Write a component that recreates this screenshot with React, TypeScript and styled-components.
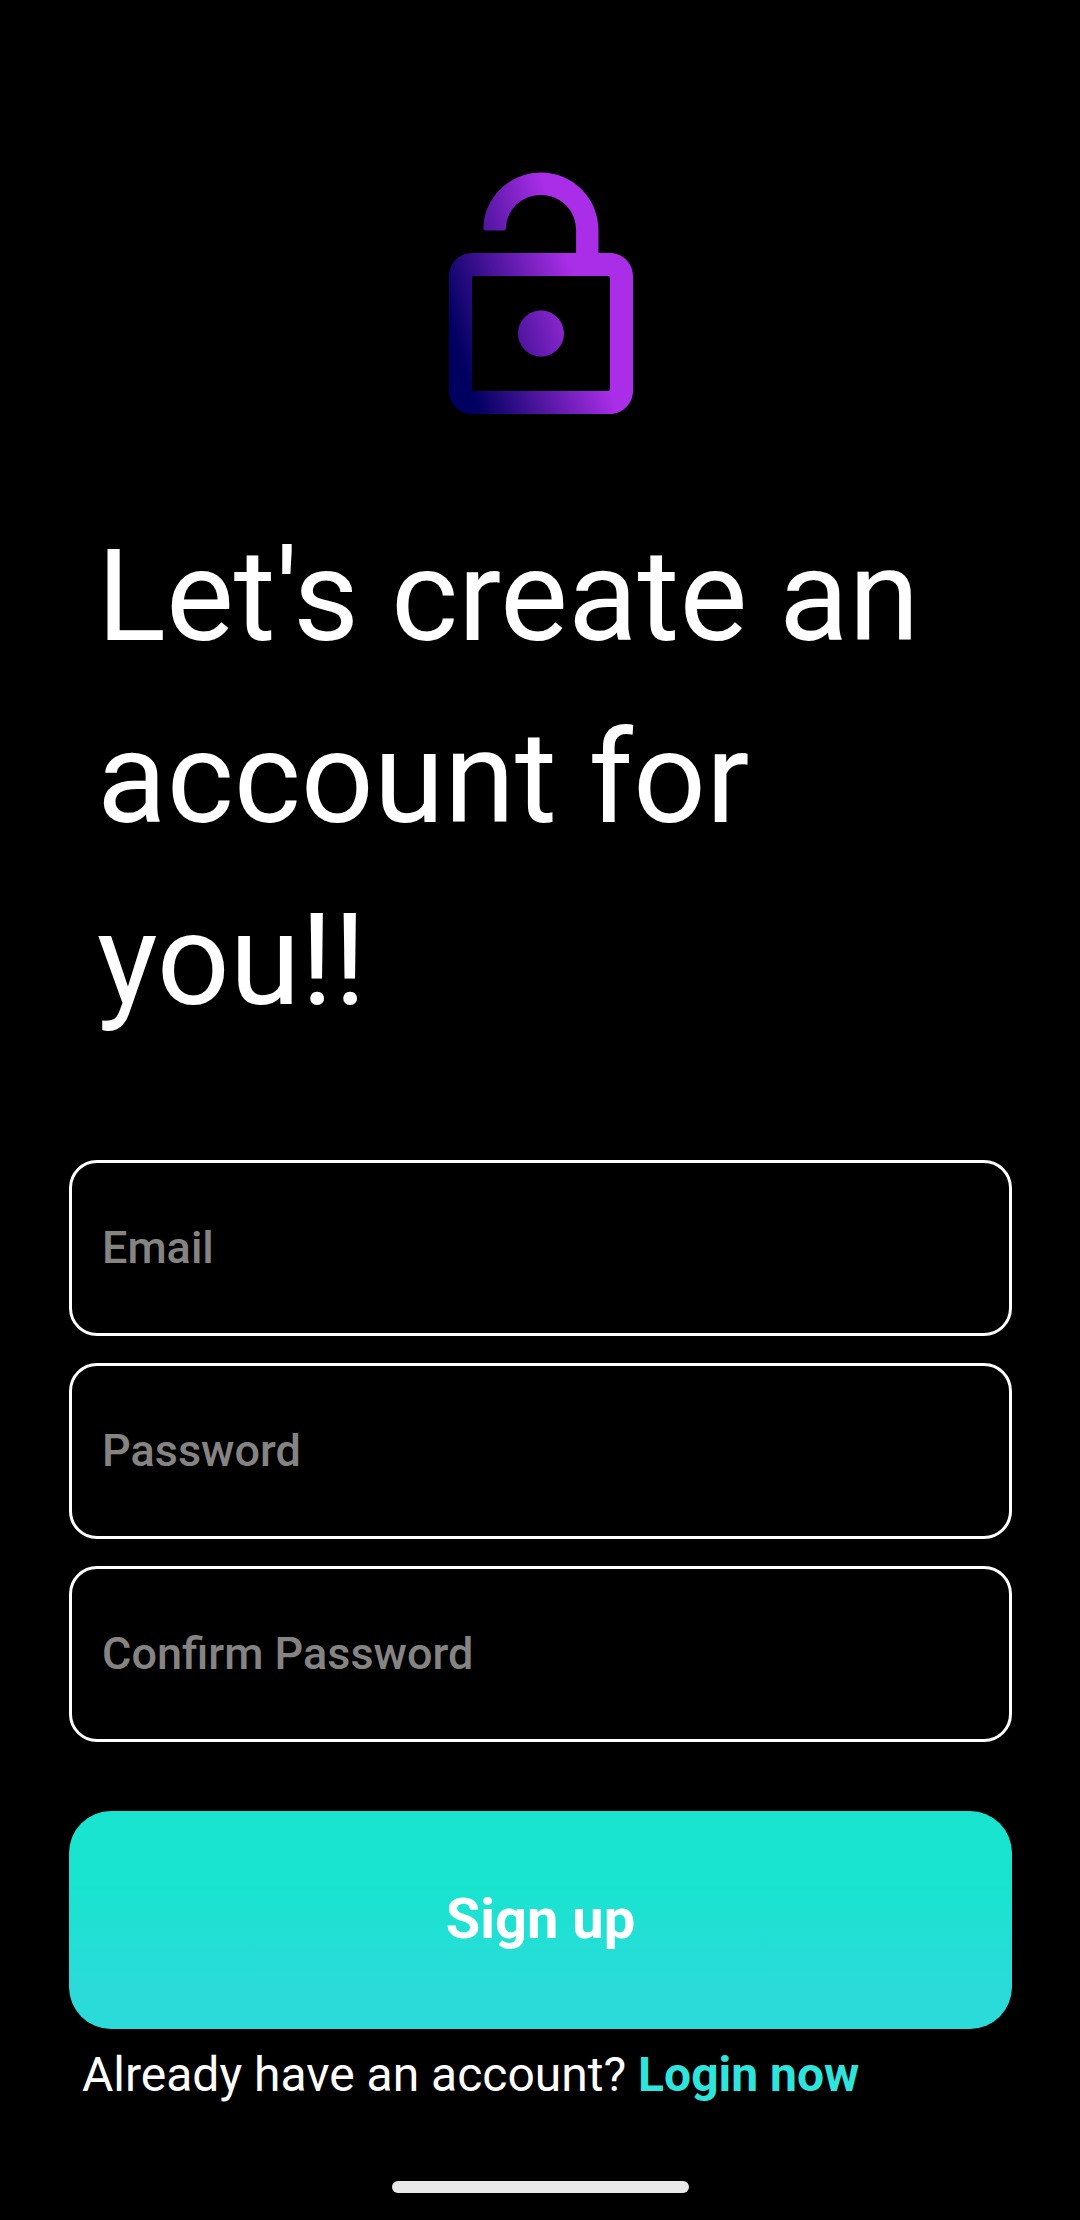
import React from "react";
import styled, { createGlobalStyle } from "styled-components";

const GlobalStyle = createGlobalStyle`
  *, *::before, *::after { box-sizing: border-box; }
  body {
    margin: 0;
    background: #000;
    color: #fff;
    font-family: Roboto, "Noto Sans", sans-serif;
  }
`;

const Screen = styled.main`
  display: flex;
  flex-direction: column;
  min-height: 100vh;
  padding: 161px 68px 27px 69px;
`;

const LockIcon = styled.svg`
  align-self: center;
  width: 276px;
  height: 276px;
`;

const Title = styled.h1`
  margin: 68px 28px 0;
  font-size: 128px;
  line-height: 182px;
  font-weight: 400;
`;

const Form = styled.form`
  display: flex;
  flex-direction: column;
  gap: 27px;
  margin-top: 109px;
`;

const Field = styled.input`
  width: 100%;
  height: 176px;
  padding: 0 30px 2px;
  border: 3px solid #fff;
  border-radius: 28px;
  outline: none;
  background: transparent;
  color: #fff;
  font-family: inherit;
  font-size: 45px;
  font-weight: 500;

  &::placeholder {
    color: #868482;
    opacity: 1;
  }
`;

const SubmitButton = styled.button`
  height: 218px;
  margin-top: 42px;
  padding: 0 0 2px;
  border: 0;
  border-radius: 42px;
  background: linear-gradient(180deg, #18e4cf 33%, #2adbd9 80%);
  color: #fff;
  font-family: inherit;
  font-size: 56px;
  font-weight: 700;
  cursor: pointer;
`;

const Footer = styled.p`
  margin: 18px 13px 0;
  font-size: 48px;
  line-height: 56px;
`;

const LoginLink = styled.a`
  color: #2ee5dd;
  font-weight: 700;
  text-decoration: none;
`;

const HomeIndicator = styled.div`
  align-self: center;
  width: 297px;
  height: 12px;
  margin-top: auto;
  border-radius: 6px;
  background: #e9e9e9;
`;

const fields = [
  { name: "email", label: "Email", type: "email" },
  { name: "password", label: "Password", type: "password" },
  { name: "confirm", label: "Confirm Password", type: "password" },
];

export default function App() {
  return (
    <>
      <GlobalStyle />
      <Screen>
        <LockIcon viewBox="0 0 24 24" aria-hidden="true">
          <defs>
            <linearGradient
              id="lock-fill"
              gradientUnits="userSpaceOnUse"
              x1="6.17"
              y1="20.78"
              x2="17.18"
              y2="17.24"
            >
              <stop offset="0" stopColor="#000060" />
              <stop offset="1" stopColor="#aa2ee8" />
            </linearGradient>
          </defs>
          <path
            fill="url(#lock-fill)"
            fillRule="evenodd"
            d="M12 17c1.1 0 2-.9 2-2s-.9-2-2-2-2 .9-2 2 .9 2 2 2zM18 8h-1V6c0-2.76-2.24-5-5-5S7 3.24 7 5.9q0 .15.15.15h1.65q.15 0 .15-.15C8.95 4.29 10.29 2.95 12 2.95s3.05 1.34 3.05 3.05v1.95q0 .05-.05.05H6c-1.1 0-2 .9-2 2v10c0 1.1.9 2 2 2h12c1.1 0 2-.9 2-2V10c0-1.1-.9-2-2-2zM17.85 20H6.15q-.15 0-.15-.15V10.15q0-.15.15-.15h11.7q.15 0 .15.15v9.7q0 .15-.15.15z"
          />
        </LockIcon>
        <Title>Let's create an account for you!!</Title>
        <Form onSubmit={(event) => event.preventDefault()}>
          {fields.map((field) => (
            <Field
              key={field.name}
              name={field.name}
              type={field.type}
              placeholder={field.label}
              aria-label={field.label}
            />
          ))}
          <SubmitButton type="submit">Sign up</SubmitButton>
        </Form>
        <Footer>
          Already have an account? <LoginLink href="#login">Login now</LoginLink>
        </Footer>
        <HomeIndicator />
      </Screen>
    </>
  );
}
